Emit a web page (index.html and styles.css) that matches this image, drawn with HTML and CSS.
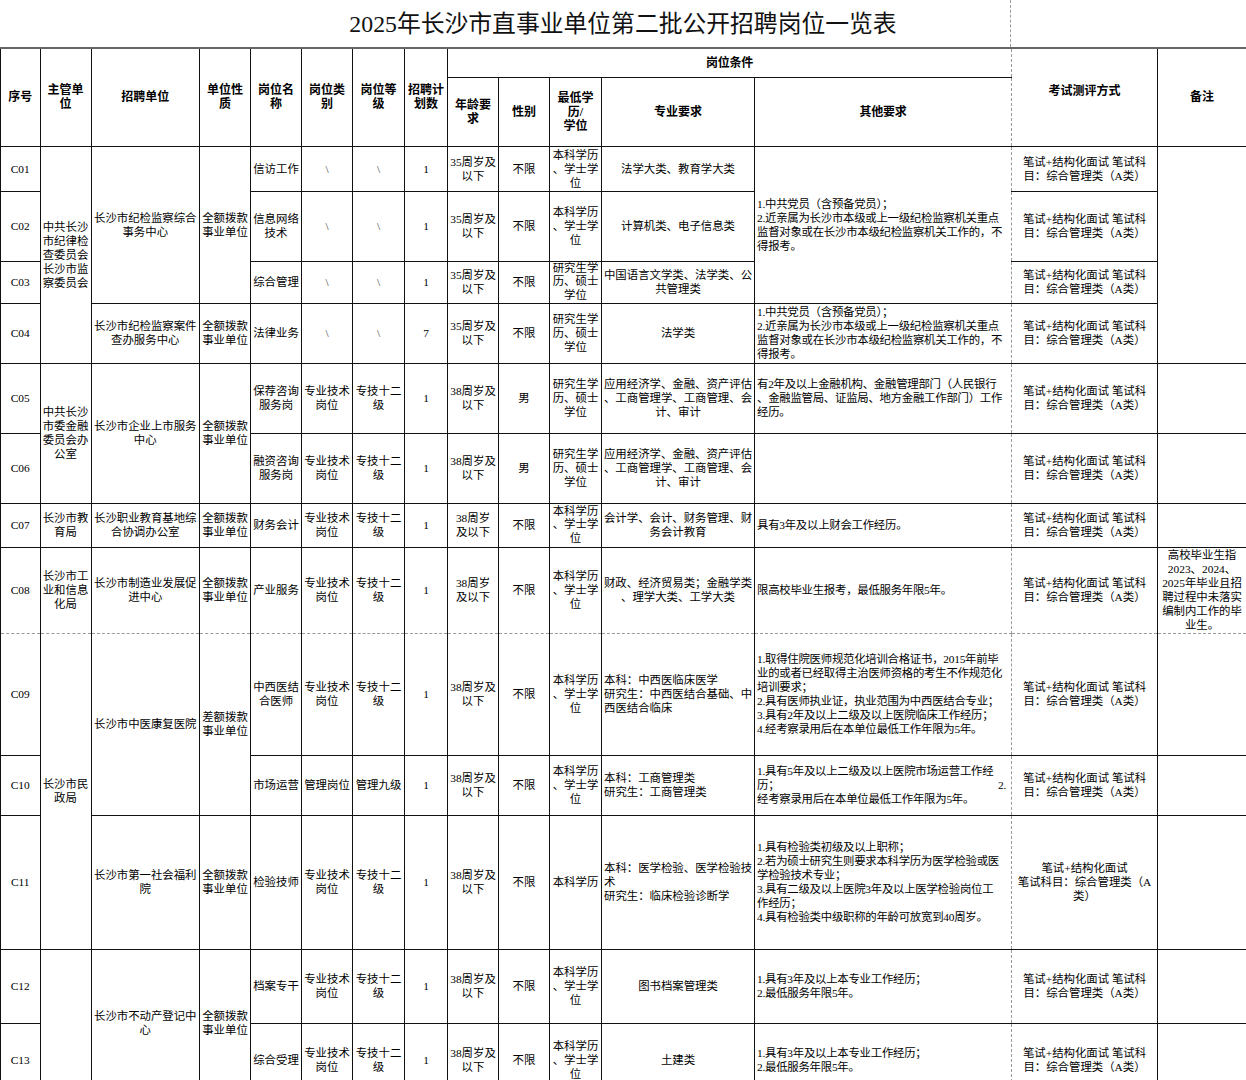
FILE: index.html
```html
<!DOCTYPE html>
<html lang="zh-CN">
<head>
<meta charset="utf-8">
<title>2025年长沙市直事业单位第二批公开招聘岗位一览表</title>
<link rel="stylesheet" href="styles.css">
</head>
<body>
<div class="sheet">
  <div class="title">2025年长沙市直事业单位第二批公开招聘岗位一览表</div>
  <table class="grid">
    <colgroup>
      <col class="c-no"><col class="c-dept"><col class="c-unit"><col class="c-type"><col class="c-post"><col class="c-cat"><col class="c-lvl"><col class="c-num"><col class="c-age"><col class="c-sex"><col class="c-edu"><col class="c-major"><col class="c-other"><col class="c-exam"><col class="c-note">
    </colgroup>
    <thead>
      <tr class="h29">
        <th rowspan="2">序号</th>
        <th rowspan="2">主管单<br>位</th>
        <th rowspan="2">招聘单位</th>
        <th rowspan="2">单位性<br>质</th>
        <th rowspan="2">岗位名<br>称</th>
        <th rowspan="2">岗位类<br>别</th>
        <th rowspan="2">岗位等<br>级</th>
        <th rowspan="2">招聘计<br>划数</th>
        <th colspan="5" class="o">岗位条件</th>
        <th rowspan="2" class="x exam-h">考试测评方式</th>
        <th rowspan="2">备注</th>
      </tr>
      <tr class="h69">
        <th>年龄要<br>求</th>
        <th>性别</th>
        <th>最低学<br>历/<br>学位</th>
        <th>专业要求</th>
        <th class="o">其他要求</th>
      </tr>
    </thead>
    <tbody>
      <tr class="h45">
        <td>C01</td>
        <td rowspan="4">中共长沙<br>市纪律检<br>查委员会<br>长沙市监<br>察委员会</td>
        <td rowspan="3">长沙市纪检监察综合<br>事务中心</td>
        <td rowspan="3">全额拨款<br>事业单位</td>
        <td>信访工作</td>
        <td class="na">\</td>
        <td class="na">\</td>
        <td>1</td>
        <td>35周岁及<br>以下</td>
        <td>不限</td>
        <td>本科学历<br>、学士学<br>位</td>
        <td>法学大类、教育学大类</td>
        <td rowspan="3" class="o l">1.中共党员（含预备党员）；<br>2.近亲属为长沙市本级或上一级纪检监察机关重点<br>监督对象或在长沙市本级纪检监察机关工作的，不<br>得报考。</td>
        <td class="x">笔试+结构化面试 笔试科<br>目：综合管理类（A类）</td>
        <td rowspan="4"></td>
      </tr>
      <tr class="h70">
        <td>C02</td>
        <td>信息网络<br>技术</td>
        <td class="na">\</td>
        <td class="na">\</td>
        <td>1</td>
        <td>35周岁及<br>以下</td>
        <td>不限</td>
        <td>本科学历<br>、学士学<br>位</td>
        <td>计算机类、电子信息类</td>
        <td class="x">笔试+结构化面试 笔试科<br>目：综合管理类（A类）</td>
      </tr>
      <tr class="h42">
        <td>C03</td>
        <td>综合管理</td>
        <td class="na">\</td>
        <td class="na">\</td>
        <td>1</td>
        <td>35周岁及<br>以下</td>
        <td>不限</td>
        <td class="tight">研究生学<br>历、硕士<br>学位</td>
        <td>中国语言文学类、法学类、公<br>共管理类</td>
        <td class="x">笔试+结构化面试 笔试科<br>目：综合管理类（A类）</td>
      </tr>
      <tr class="h60">
        <td>C04</td>
        <td>长沙市纪检监察案件<br>查办服务中心</td>
        <td>全额拨款<br>事业单位</td>
        <td>法律业务</td>
        <td class="na">\</td>
        <td class="na">\</td>
        <td>7</td>
        <td>35周岁及<br>以下</td>
        <td>不限</td>
        <td>研究生学<br>历、硕士<br>学位</td>
        <td>法学类</td>
        <td class="o l">1.中共党员（含预备党员）；<br>2.近亲属为长沙市本级或上一级纪检监察机关重点<br>监督对象或在长沙市本级纪检监察机关工作的，不<br>得报考。</td>
        <td class="x">笔试+结构化面试 笔试科<br>目：综合管理类（A类）</td>
      </tr>
      <tr class="h70">
        <td>C05</td>
        <td rowspan="2">中共长沙<br>市委金融<br>委员会办<br>公室</td>
        <td rowspan="2">长沙市企业上市服务<br>中心</td>
        <td rowspan="2">全额拨款<br>事业单位</td>
        <td>保荐咨询<br>服务岗</td>
        <td>专业技术<br>岗位</td>
        <td>专技十二<br>级</td>
        <td>1</td>
        <td>38周岁及<br>以下</td>
        <td>男</td>
        <td>研究生学<br>历、硕士<br>学位</td>
        <td>应用经济学、金融、资产评估<br>、工商管理学、工商管理、会<br>计、审计</td>
        <td class="o l">有2年及以上金融机构、金融管理部门（人民银行<br>、金融监管局、证监局、地方金融工作部门）工作<br>经历。</td>
        <td class="x">笔试+结构化面试 笔试科<br>目：综合管理类（A类）</td>
        <td></td>
      </tr>
      <tr class="h70">
        <td>C06</td>
        <td>融资咨询<br>服务岗</td>
        <td>专业技术<br>岗位</td>
        <td>专技十二<br>级</td>
        <td>1</td>
        <td>38周岁及<br>以下</td>
        <td>男</td>
        <td>研究生学<br>历、硕士<br>学位</td>
        <td>应用经济学、金融、资产评估<br>、工商管理学、工商管理、会<br>计、审计</td>
        <td class="o l"></td>
        <td class="x">笔试+结构化面试 笔试科<br>目：综合管理类（A类）</td>
        <td></td>
      </tr>
      <tr class="h44">
        <td>C07</td>
        <td>长沙市教<br>育局</td>
        <td>长沙职业教育基地综<br>合协调办公室</td>
        <td>全额拨款<br>事业单位</td>
        <td>财务会计</td>
        <td>专业技术<br>岗位</td>
        <td>专技十二<br>级</td>
        <td>1</td>
        <td>38周岁<br>及以下</td>
        <td>不限</td>
        <td class="tight">本科学历<br>、学士学<br>位</td>
        <td>会计学、会计、财务管理、财<br>务会计教育</td>
        <td class="o l">具有3年及以上财会工作经历。</td>
        <td class="x">笔试+结构化面试 笔试科<br>目：综合管理类（A类）</td>
        <td></td>
      </tr>
      <tr class="h86 pb-above">
        <td>C08</td>
        <td>长沙市工<br>业和信息<br>化局</td>
        <td>长沙市制造业发展促<br>进中心</td>
        <td>全额拨款<br>事业单位</td>
        <td>产业服务</td>
        <td>专业技术<br>岗位</td>
        <td>专技十二<br>级</td>
        <td>1</td>
        <td>38周岁<br>及以下</td>
        <td>不限</td>
        <td>本科学历<br>、学士学<br>位</td>
        <td>财政、经济贸易类；金融学类<br>、理学大类、工学大类</td>
        <td class="o l">限高校毕业生报考，最低服务年限5年。</td>
        <td class="x">笔试+结构化面试 笔试科<br>目：综合管理类（A类）</td>
        <td>高校毕业生指<br>2023、2024、<br>2025年毕业且招<br>聘过程中未落实<br>编制内工作的毕<br>业生。</td>
      </tr>
      <tr class="h122 pb-below">
        <td>C09</td>
        <td rowspan="3">长沙市民<br>政局</td>
        <td rowspan="2">长沙市中医康复医院</td>
        <td rowspan="2">差额拨款<br>事业单位</td>
        <td>中西医结<br>合医师</td>
        <td>专业技术<br>岗位</td>
        <td>专技十二<br>级</td>
        <td>1</td>
        <td>38周岁及<br>以下</td>
        <td>不限</td>
        <td>本科学历<br>、学士学<br>位</td>
        <td class="l">本科：中西医临床医学<br>研究生：中西医结合基础、中<br>西医结合临床</td>
        <td class="o l">1.取得住院医师规范化培训合格证书，2015年前毕<br>业的或者已经取得主治医师资格的考生不作规范化<br>培训要求；<br>2.具有医师执业证，执业范围为中西医结合专业；<br>3.具有2年及以上二级及以上医院临床工作经历；<br>4.经考察录用后在本单位最低工作年限为5年。</td>
        <td class="x">笔试+结构化面试 笔试科<br>目：综合管理类（A类）</td>
        <td></td>
      </tr>
      <tr class="h60">
        <td>C10</td>
        <td>市场运营</td>
        <td>管理岗位</td>
        <td>管理九级</td>
        <td>1</td>
        <td>38周岁及<br>以下</td>
        <td>不限</td>
        <td>本科学历<br>、学士学<br>位</td>
        <td class="l">本科：工商管理类<br>研究生：工商管理类</td>
        <td class="o l wide">1.具有5年及以上二级及以上医院市场运营工作经<br><span class="split"><span>历；</span><span>2.</span></span>经考察录用后在本单位最低工作年限为5年。</td>
        <td class="x">笔试+结构化面试 笔试科<br>目：综合管理类（A类）</td>
        <td></td>
      </tr>
      <tr class="h134">
        <td>C11</td>
        <td>长沙市第一社会福利<br>院</td>
        <td>全额拨款<br>事业单位</td>
        <td>检验技师</td>
        <td>专业技术<br>岗位</td>
        <td>专技十二<br>级</td>
        <td>1</td>
        <td>38周岁及<br>以下</td>
        <td>不限</td>
        <td>本科学历</td>
        <td class="l">本科：医学检验、医学检验技<br>术<br>研究生：临床检验诊断学</td>
        <td class="o l">1.具有检验类初级及以上职称；<br>2.若为硕士研究生则要求本科学历为医学检验或医<br>学检验技术专业；<br>3.具有二级及以上医院3年及以上医学检验岗位工<br>作经历；<br>4.具有检验类中级职称的年龄可放宽到40周岁。</td>
        <td class="x">笔试+结构化面试<br>笔试科目：综合管理类（A<br>类）</td>
        <td></td>
      </tr>
      <tr class="h74">
        <td>C12</td>
        <td rowspan="2"></td>
        <td rowspan="2">长沙市不动产登记中<br>心</td>
        <td rowspan="2">全额拨款<br>事业单位</td>
        <td>档案专干</td>
        <td>专业技术<br>岗位</td>
        <td>专技十二<br>级</td>
        <td>1</td>
        <td>38周岁及<br>以下</td>
        <td>不限</td>
        <td>本科学历<br>、学士学<br>位</td>
        <td>图书档案管理类</td>
        <td class="o l">1.具有3年及以上本专业工作经历；<br>2.最低服务年限5年。</td>
        <td class="x">笔试+结构化面试 笔试科<br>目：综合管理类（A类）</td>
        <td></td>
      </tr>
      <tr class="h74">
        <td>C13</td>
        <td>综合受理</td>
        <td>专业技术<br>岗位</td>
        <td>专技十二<br>级</td>
        <td>1</td>
        <td>38周岁及<br>以下</td>
        <td>不限</td>
        <td>本科学历<br>、学士学<br>位</td>
        <td>土建类</td>
        <td class="o l">1.具有3年及以上本专业工作经历；<br>2.最低服务年限5年。</td>
        <td class="x">笔试+结构化面试 笔试科<br>目：综合管理类（A类）</td>
        <td></td>
      </tr>
    </tbody>
  </table>
</div>
</body>
</html>
```

FILE: styles.css
```css
html, body {
  margin: 0;
  padding: 0;
  background: #fff;
}

body {
  font-family: "Liberation Serif", "Noto Sans CJK SC", serif;
  color: #000;
}

.sheet {
  width: 1246px;
}

.title {
  position: relative;
  height: 47px;
  line-height: 48px;
  text-align: center;
  font-size: 23.8px;
  color: #111;
  font-family: "Liberation Serif", "Noto Sans CJK SC", serif;
}

.title::after {
  content: "";
  position: absolute;
  left: 1010px;
  top: 0;
  bottom: 0;
  border-left: 1px dashed #9a9a9a;
}

.grid {
  width: 1246px;
  table-layout: fixed;
  border-collapse: collapse;
  font-size: 11.4px;
  line-height: 14px;
}

.c-no { width: 39.5px; }
.c-dept { width: 51px; }
.c-unit { width: 108.5px; }
.c-type { width: 51px; }
.c-post { width: 51px; }
.c-cat { width: 51px; }
.c-lvl { width: 52px; }
.c-num { width: 43px; }
.c-age { width: 51px; }
.c-sex { width: 51px; }
.c-edu { width: 52px; }
.c-major { width: 153px; }
.c-other { width: 257px; }
.c-exam { width: 146px; }
.c-note { width: 89px; }

.grid th,
.grid td {
  border: 1px solid #111;
  padding: 0 1px;
  text-align: center;
  vertical-align: middle;
  white-space: nowrap;
  overflow: visible;
}

.grid th {
  font-family: "Liberation Serif", "Noto Sans CJK SC", serif;
  font-weight: 700;
  font-size: 12px;
  line-height: 14px;
}

.grid thead tr:first-child th {
  border-top: 2px solid #666;
}

.grid .exam-h {
  padding-bottom: 12px;
}

.grid td.l {
  text-align: left;
  padding-left: 2px;
}

.grid .o {
  border-right: 1px dashed #9a9a9a;
  letter-spacing: -0.25px;
}

.grid .x {
  border-left: 1px dashed #9a9a9a;
}

.grid .na {
  color: #444;
}

.grid .tight {
  line-height: 13.4px;
}

.grid td.wide {
  padding-right: 5px;
}

.split {
  display: flex;
  justify-content: space-between;
}

.grid tr.pb-above td {
  border-bottom: 1px dashed #9a9a9a;
}

.grid tr.pb-below td {
  border-top: 1px dashed #9a9a9a;
}

.h29 { height: 29px; }
.h69 { height: 69px; }
.h42 { height: 42px; }
.h44 { height: 44px; }
.h45 { height: 45px; }
.h60 { height: 60px; }
.h70 { height: 70px; }
.h74 { height: 74px; }
.h86 { height: 86px; }
.h122 { height: 122px; }
.h134 { height: 134px; }
```
